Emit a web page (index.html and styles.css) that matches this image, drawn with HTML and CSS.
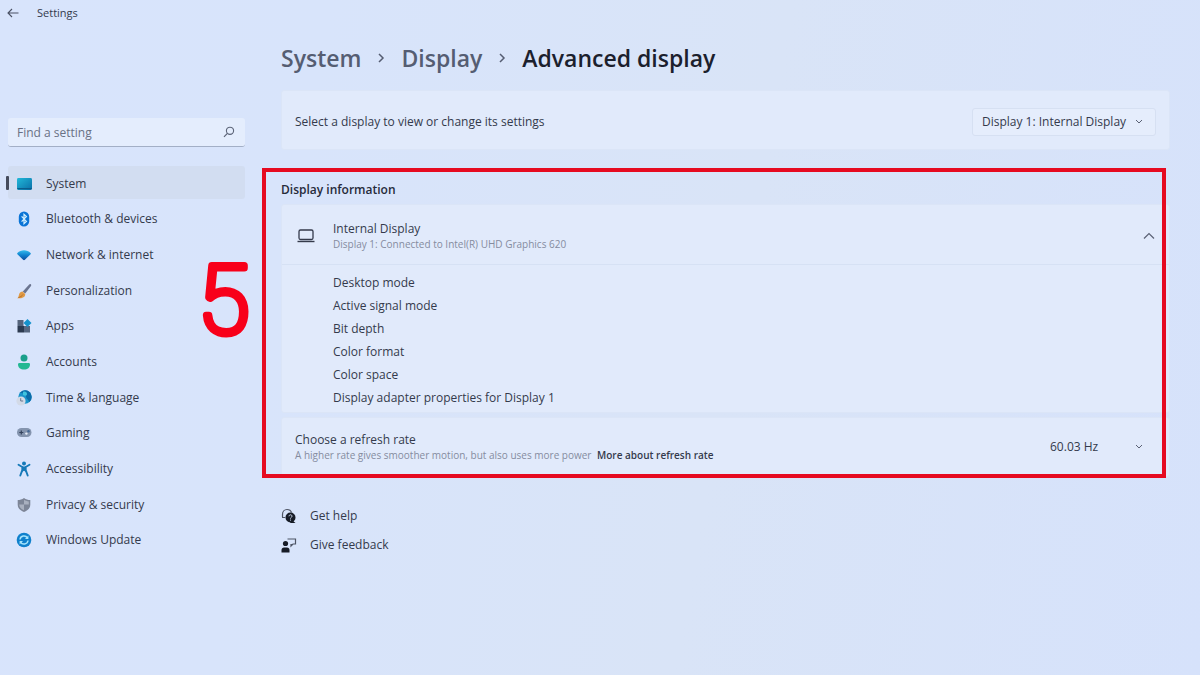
FILE: index.html
```
<!DOCTYPE html>
<html lang="en">
<head>
  <meta charset="UTF-8" />
  <title>Settings</title>
  <meta name="viewport" content="width=device-width, initial-scale=1" />
  <link rel="stylesheet" href="styles.css">
</head>
<body>
  <header class="titlebar">
    <button class="back-btn" aria-label="Back">
      <svg width="12" height="10" viewBox="0 0 12 10"><path d="M11.5 5H1M5 1L1 5l4 4" fill="none" stroke="currentColor" stroke-width="1.1"/></svg>
    </button>
    <span class="app-title">Settings</span>
  </header>

  <div class="layout">
    <aside class="sidebar">
      <div class="search">
        <input type="text" placeholder="Find a setting" aria-label="Find a setting">
        <svg class="search-icon" width="12" height="12" viewBox="0 0 12 12"><circle cx="7" cy="4.8" r="3.6" fill="none" stroke="#5c6478" stroke-width="1.1"/><path d="M4.4 7.4L1 10.8" stroke="#5c6478" stroke-width="1.2"/></svg>
      </div>

      <nav class="nav">
        <a class="nav-item active" href="#system">
          <svg viewBox="0 0 16 16"><defs><linearGradient id="sys" x1="0" y1="0" x2="1" y2="1"><stop offset="0" stop-color="#22b8d8"/><stop offset="1" stop-color="#0a6fa8"/></linearGradient></defs><rect x="1" y="2" width="15" height="12" rx="1.4" fill="url(#sys)"/><path d="M1.4 12.6h14.2" stroke="#0b5c8c" stroke-width="1.2"/></svg>
          System
        </a>
        <a class="nav-item" href="#bluetooth">
          <svg viewBox="0 0 16 16"><rect x="2.8" y="0.5" width="10.4" height="15" rx="5.2" fill="#0a74d6"/><path d="M5.6 5.4l4.8 5L8 12.6V3.4l2.4 2.2-4.8 5" fill="none" stroke="#d5f1ff" stroke-width="1.2"/></svg>
          Bluetooth &amp; devices
        </a>
        <a class="nav-item" href="#network">
          <svg viewBox="0 0 16 16"><defs><linearGradient id="net" x1="0" y1="0" x2="0" y2="1"><stop offset="0" stop-color="#35bdec"/><stop offset=".5" stop-color="#1182cf"/><stop offset="1" stop-color="#0b4b9c"/></linearGradient></defs><path d="M1.4 6C5 2.2 11 2.2 14.6 6c.4.4.3.8 0 1.2l-5.7 5.6c-.5.5-1.3.5-1.8 0L1.4 7.2c-.3-.4-.4-.8 0-1.2z" fill="url(#net)"/></svg>
          Network &amp; internet
        </a>
        <a class="nav-item" href="#personalization">
          <svg viewBox="0 0 16 16"><path d="M14.8 1.3c.7.6.5 1.3 0 2L9.2 10.6 6.8 8.5l6.4-7c.5-.6 1.1-.7 1.6-.2z" fill="#6b7590"/><path d="M6.6 8.6l2.6 2.3c.2 3-2.7 4.6-8 4.4 1.6-1 1.3-2.3 1.9-4 .6-1.6 1.9-2.7 3.5-2.7z" fill="#e09a45"/><path d="M2.5 14.5c2-.4 3.5-1.5 4.5-3" stroke="#b9712c" fill="none"/></svg>
          Personalization
        </a>
        <a class="nav-item" href="#apps">
          <svg viewBox="0 0 16 16"><rect x="1.5" y="2" width="6" height="6" fill="#55647c"/><rect x="1.5" y="8" width="6.5" height="6.5" fill="#2c3a50"/><rect x="8" y="8" width="6" height="6.5" fill="#56667f"/><path d="M11.5 1l4 4-4 4-4-4z" fill="#1592cb"/></svg>
          Apps
        </a>
        <a class="nav-item" href="#accounts">
          <svg viewBox="0 0 16 16"><circle cx="8" cy="4" r="3.5" fill="#1a9f8b"/><path d="M3.5 9h9c1 0 1.5.5 1.5 1.5C14 13.5 11.5 15.5 8 15.5s-6-2-6-5C2 9.500 2.500 9 3.500 9z" fill="#24b893"/></svg>
          Accounts
        </a>
        <a class="nav-item" href="#time">
          <svg viewBox="0 0 16 16"><circle cx="9" cy="7" r="6.7" fill="#1b94cb"/><path d="M9 .3a6.700 6.700 0 0 1 4 12c0-3-3-3-3-6S6 3 4 3A6.700 6.700 0 0 1 9 .3z" fill="#0b6ca9"/><path d="M7 2c2-1 4 0 4 2S9 6 7 5z" fill="#40c3de"/><circle cx="5" cy="11" r="4.6" fill="#d3dae7"/><path d="M4.7 8.200V11h2.500" fill="none" stroke="#68778f" stroke-width="1"/></svg>
          Time &amp; language
        </a>
        <a class="nav-item" href="#gaming">
          <svg viewBox="0 0 16 16"><rect x="1" y="3" width="14.5" height="9" rx="4.5" fill="#8494ae"/><path d="M5.3 5.500v4M3.300 7.500h4" stroke="#33425c" stroke-width="1.2"/><circle cx="10.4" cy="8.6" r="1.2" fill="#e7edf8"/><circle cx="12.5" cy="6.3" r="1.2" fill="#456895"/></svg>
          Gaming
        </a>
        <a class="nav-item" href="#accessibility">
          <svg viewBox="0 0 16 16"><circle cx="8" cy="2.5" r="2" fill="#1579b8"/><path d="M2.5 3.800L6.300 6v3.200L4.300 14.500M13.500 3.800L9.700 6v3.200l2 5.300" fill="none" stroke="#1579b8" stroke-width="1.9" stroke-linecap="round" stroke-linejoin="round"/><path d="M6 5.500h4V11L8 9.800 6 11z" fill="#1579b8"/></svg>
          Accessibility
        </a>
        <a class="nav-item" href="#privacy">
          <svg viewBox="0 0 16 16"><path d="M8 1c2 1.400 4 2 6.300 2v4.500c0 4-2.800 6-6.300 7.500-3.500-1.500-6.300-3.500-6.300-7.500V3C4 3 6 2.400 8 1z" fill="#7d8597"/><path d="M8 2.800c1.500 1 3 1.400 4.800 1.600v3.200H8zM3.200 7.600H8v5.700c-2.800-1.200-4.800-2.700-4.800-5.700z" fill="#a9b0bf"/></svg>
          Privacy &amp; security
        </a>
        <a class="nav-item" href="#update">
          <svg viewBox="0 0 16 16"><circle cx="8" cy="8" r="7.3" fill="#0f80cc"/><path d="M4 7.500c.5-4 5.500-4.700 7.500-1.700M12 8.500c-.5 4-5.500 4.700-7.500 1.700" fill="none" stroke="#a5e3fb" stroke-width="1.5"/><path d="M12.400 3.500v3.400H9zM3.600 12.500V9.100H7z" fill="#a5e3fb"/></svg>
          Windows Update
        </a>
      </nav>

      <!-- step marker -->
      <svg class="step" width="70" height="140" viewBox="0 0 70 140"><text x="8" y="100">5</text></svg>
    </aside>

    <main class="content">
      <h1 class="breadcrumb">
        <a href="#system">System</a>
        <svg width="8" height="10" viewBox="0 0 8 10"><path d="M2 1l4 4-4 4" fill="none" stroke="currentColor" stroke-width="1.5"/></svg>
        <a href="#display">Display</a>
        <svg width="8" height="10" viewBox="0 0 8 10"><path d="M2 1l4 4-4 4" fill="none" stroke="currentColor" stroke-width="1.5"/></svg>
        <span>Advanced display</span>
      </h1>

      <div class="card row row-select">
        <label for="display-select">Select a display to view or change its settings</label>
        <div class="select select-display">
          <select id="display-select"><option>Display 1: Internal Display</option></select>
          <svg class="chevron" width="8" height="6" viewBox="0 0 8 6"><path d="M1 1l3 3 3-3" fill="none" stroke="currentColor"/></svg>
        </div>
      </div>

      <section class="info">
        <h2>Display information</h2>
        <details class="card" open>
          <summary>
            <svg width="18" height="16" viewBox="0 0 18 16"><rect x="2" y="2" width="14" height="9.5" rx="1.5" fill="none" stroke="#343a4b" stroke-width="1.3"/><path d="M.5 13.500h17" stroke="#343a4b" stroke-width="1.4"/></svg>
            <span class="text">
              <span class="name">Internal Display</span>
              <span class="hint">Display 1: Connected to Intel(R) UHD Graphics 620</span>
            </span>
            <svg width="12" height="8" viewBox="0 0 12 8"><path d="M1 6.500l5-5 5 5" fill="none" stroke="#5a6174" stroke-width="1.2"/></svg>
          </summary>
          <ul class="props">
            <li>Desktop mode</li>
            <li>Active signal mode</li>
            <li>Bit depth</li>
            <li>Color format</li>
            <li>Color space</li>
            <li><a href="#adapter">Display adapter properties for Display 1</a></li>
          </ul>
        </details>

        <div class="card row">
          <div class="text">
            <label class="name" for="rate">Choose a refresh rate</label>
            <span class="hint">A higher rate gives smoother motion, but also uses more power <a href="#rate">More about refresh rate</a></span>
          </div>
          <div class="select select-rate">
            <select id="rate"><option>60.03 Hz</option></select>
            <svg class="chevron" width="8" height="6" viewBox="0 0 8 6"><path d="M1 1l3 3 3-3" fill="none" stroke="currentColor"/></svg>
          </div>
        </div>
      </section>

      <div class="help">
        <a href="#help">
          <svg width="16" height="16" viewBox="0 0 16 16"><path d="M1.500 9V6.500C1.500 3.500 3.500 1.500 6 1.500s4 1.300 4.500 3M1 9.500h3" fill="none" stroke="#4d5464" stroke-width="1.2"/><circle cx="9.5" cy="9.5" r="5" fill="#161b26"/><path d="M11 12l3.500 3H9z" fill="#161b26"/><path d="M8 8.300c.1-2 3-2 3 0 0 1-1.500 1-1.500 2.300M9.500 11.600v1" fill="none" stroke="#cfdaf0"/></svg>
          Get help
        </a>
        <a href="#feedback">
          <svg width="16" height="16" viewBox="0 0 16 16"><circle cx="4.5" cy="6.5" r="2.6" fill="#161b26"/><path d="M.5 15.500V13c0-1.500 1-2.500 2.500-2.500h3c1.500 0 2.500 1 2.500 2.500v2.500z" fill="#161b26"/><path d="M6.500 2h8v5H12l-2 2V7" fill="none" stroke="#4d5464" stroke-width="1.2"/></svg>
          Give feedback
        </a>
      </div>
    </main>
  </div>
</body>
</html>
```

FILE: styles.css
```
* { box-sizing: border-box; }
html, body {
  margin: 0; padding: 0; min-height: 100vh;
}
body {
  font-family: 'Open Sans', 'Noto Sans', sans-serif;
  font-size: 12px; line-height: 16px; color: #343a4c;
  background: linear-gradient(100deg, #d8e4fc 0%, #d8e4fb 25%, #d9e4f7 60%, #d6e2fb 100%);
}
a { color: inherit; text-decoration: none; }
h1, h2, ul { margin: 0; padding: 0; font-size: inherit; }
input, select, button { font: inherit; color: inherit; }

/* title bar */
.titlebar {
  display: flex; align-items: center; gap: 18px;
  height: 26px; padding: 0 7px;
}
.back-btn {
  display: flex; padding: 0; border: none; background: none;
  color: #4a5164;
}
.app-title { font-size: 11px; }

.layout {
  display: grid;
  grid-template-columns: 237px minmax(0, 1fr);
  gap: 36px;
  padding: 0 30px 24px 8px;
}

/* sidebar */
.sidebar { position: relative; padding-top: 92px; }
.search { position: relative; }
.search input {
  display: block; width: 100%; height: 29px; padding: 0 9px;
  border: none; border-bottom: 1px solid #a3afc6; border-radius: 3px;
  background: #e4edfd; outline: none;
}
.search input::placeholder { color: #697185; opacity: 1; }
.search-icon { position: absolute; right: 10px; top: 8px; }
.nav {
  display: flex; flex-direction: column; justify-content: space-between;
  height: 390px; margin-top: 19px;
}
.nav-item {
  position: relative;
  display: flex; align-items: center; gap: 14px;
  height: 33px; padding: 2px 0 0 8px; border-radius: 3px;
}
.nav-item svg { width: 16px; height: 16px; }
.nav-item.active { background: #d2ddf1; }
.nav-item.active::before {
  content: ''; position: absolute; left: -2px; top: 10px;
  width: 3px; height: 14px; border-radius: 1px; background: #454b5c;
}
.step { position: absolute; left: 182px; top: 207px; }
.step text {
  font-family: Roboto, sans-serif; font-size: 94px; font-weight: 100;
  fill: #f8001a; stroke: #f8001a; stroke-width: 7; stroke-linejoin: round;
}

/* content */
.breadcrumb {
  display: flex; align-items: center; gap: 16px;
  height: 64px;
  font-size: 23px; line-height: 32px; font-weight: 600; color: #1b202d;
}
.breadcrumb a, .breadcrumb svg { color: #555d72; }
.card {
  background: #e1eafb; border: 1px solid #dbe5f7; border-radius: 3px;
}
.row {
  display: flex; align-items: center; justify-content: space-between;
  height: 60px; padding: 0 13px;
}
.row-select { padding-top: 4px; }
.select { position: relative; }
.select select {
  appearance: none; width: 100%; height: 28px; padding: 0 9px;
  border: 1px solid #d6e0f2; border-radius: 3px; background: #e5edfc;
}
.select-display { width: 184px; }
.select-rate { width: 116px; }
.select-rate select { border-color: transparent; background: none; }
.chevron {
  position: absolute; right: 13px; top: 11px;
  color: #5a6174; pointer-events: none;
}

/* display information, framed */
.info { position: relative; padding-top: 32px; }
.info::after {
  content: ''; position: absolute; top: 18px; right: 4px; bottom: -1px; left: -19px;
  border: 4px solid #e60a20; pointer-events: none;
}
.info h2 { font-weight: 600; color: #262b3a; margin-bottom: 6px; }
summary {
  display: flex; align-items: center; gap: 18px;
  height: 60px; padding: 2px 14px 0 15px;
  border-bottom: 1px solid #d6e1f4; list-style: none;
}
summary .text { flex: 1; }
.text { display: flex; flex-direction: column; }
.hint { font-size: 10px; line-height: 14px; color: #858c9f; }
.hint a { margin-left: 3px; font-weight: 600; color: #343a4c; }
.props { list-style: none; padding: 6px 0 3px 51px; }
.props li { line-height: 23px; }
.info details { margin-bottom: 4px; }

.help {
  display: flex; flex-direction: column; align-items: flex-start; gap: 13px;
  margin-top: 31px;
}
.help a { display: flex; align-items: center; gap: 13px; }
```
